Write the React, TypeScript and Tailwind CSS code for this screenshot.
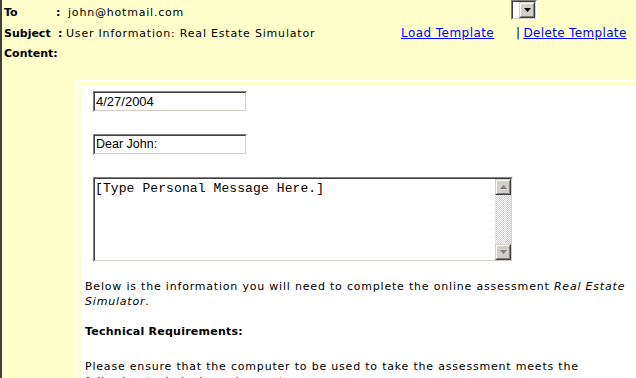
import React from "react";

const sans = { fontFamily: '"DejaVu Sans", Verdana, sans-serif' };

function Inset({ className, children }: { className?: string; children?: React.ReactNode }) {
  return (
    <div className={"border border-t-[#808080] border-l-[#808080] border-b-white border-r-white " + (className || "")}>
      <div className="flex h-full w-full border border-t-[#404040] border-l-[#404040] border-b-[#d4d0c8] border-r-[#d4d0c8] bg-white">
        {children}
      </div>
    </div>
  );
}

function ScrollButton({ up }: { up: boolean }) {
  return (
    <div className="h-[16px] w-[16px] border border-t-[#d4d0c8] border-l-[#d4d0c8] border-b-[#404040] border-r-[#404040]">
      <div className="flex h-full w-full items-center justify-center border border-t-white border-l-white border-b-[#808080] border-r-[#808080] bg-[#d4d0c8]">
        <svg width="7" height="4" viewBox="0 0 7 4">
          {up ? <path d="M3.5 0 L7 4 L0 4 Z" fill="#808080" /> : <path d="M0 0 L7 0 L3.5 4 Z" fill="#808080" />}
        </svg>
      </div>
    </div>
  );
}

export default function App() {
  return (
    <div className="h-[378px] w-[636px] overflow-hidden border-l-2 border-[#404040] bg-[#ffffcc] text-black" style={sans}>
      {/* header */}
      <div className="h-[80px] text-[11px] leading-[15px]">
        <div className="flex h-[22px] items-start">
          <div className="flex w-[399px] pl-[2px] pt-[5px]">
            <span className="w-[52px] font-bold">To</span>
            <span className="w-[12px] font-bold">:</span>
            <span className="tracking-[0.8px]">john@hotmail.com</span>
          </div>
          <div className="w-[110px]" />
          <div className="flex h-[20px] w-[26px] border border-t-[#808080] border-l-[#808080] border-b-white border-r-white">
            <div className="flex h-full w-full border border-t-[#404040] border-l-[#404040] border-b-[#d4d0c8] border-r-[#d4d0c8] bg-white">
              <div className="flex-1" />
              <div className="h-full w-[16px] border border-t-[#d4d0c8] border-l-[#d4d0c8] border-b-[#404040] border-r-[#404040]">
                <div className="flex h-full w-full items-center justify-center border border-t-white border-l-white border-b-[#808080] border-r-[#808080] bg-[#d4d0c8]">
                  <svg width="7" height="4" viewBox="0 0 7 4">
                    <path d="M0 0 L7 0 L3.5 4 Z" fill="#000" />
                  </svg>
                </div>
              </div>
            </div>
          </div>
        </div>
        <div className="flex h-[19px] items-start pt-[4px]">
          <div className="flex w-[399px] pl-[2px]">
            <span className="w-[54px] font-bold">Subject</span>
            <span className="w-[8px] font-bold">:</span>
            <span className="tracking-[0.8px]">User Information: Real Estate Simulator</span>
          </div>
          <div className="w-[110px] text-[12px] tracking-[0.45px]">
            <a href="#" className="text-[#0000ff] underline">Load Template</a>
          </div>
          <div className="text-[12px] whitespace-nowrap tracking-[0.35px]">
            <span className="ml-[5px]">|</span>
            <a href="#" className="ml-[3px] text-[#0000ff] underline">Delete Template</a>
          </div>
        </div>
        <div className="flex pt-[5px] pl-[2px]">
          <span className="font-bold">Content:</span>
        </div>
      </div>

      {/* content frame */}
      <div className="ml-[73px] h-[400px] w-[600px] border-l-2 border-t-2 border-white pl-[4px] pt-[4px]">
        <div className="h-full w-full bg-white pl-[4px] pt-[5px]">
          <div className="ml-[8px]" style={{ fontFamily: '"Liberation Sans", Arial, sans-serif' }}>
            <Inset className="h-[21px] w-[154px]">
              <span className="pl-[1px] text-[13px] leading-[17px]">4/27/2004</span>
            </Inset>
            <Inset className="mt-[22px] h-[21px] w-[154px]">
              <span className="pl-[1px] text-[12.5px] leading-[17px]">Dear John:</span>
            </Inset>
            <Inset className="mt-[22px] h-[85px] w-[420px]">
              <div className="flex-1 pl-0 pt-[2px] text-[13px] leading-[15px] tracking-[0.1px]" style={{ fontFamily: '"Liberation Mono", "Courier New", monospace' }}>
                [Type Personal Message Here.]
              </div>
              <div className="flex w-[16px] flex-col">
                <ScrollButton up />
                <div className="flex-1 bg-[repeating-conic-gradient(#d4d0c8_0_25%,#ffffff_0_50%)] bg-[length:2px_2px]" />
                <ScrollButton up={false} />
              </div>
            </Inset>
          </div>
          <div className="text-[11px] leading-[15px] whitespace-nowrap">
            <p className="mt-[17px] tracking-[0.8px]">
              Below is the information you will need to complete the online assessment <i>Real Estate</i>
              <br />
              <i>Simulator</i>.
            </p>
            <p className="mt-[15px] font-bold tracking-[0.25px]">Technical Requirements:</p>
            <p className="mt-[20px] tracking-[0.8px]">
              Please ensure that the computer to be used to take the assessment meets the
              <br />
              following technical requirements:
            </p>
          </div>
        </div>
      </div>
    </div>
  );
}
